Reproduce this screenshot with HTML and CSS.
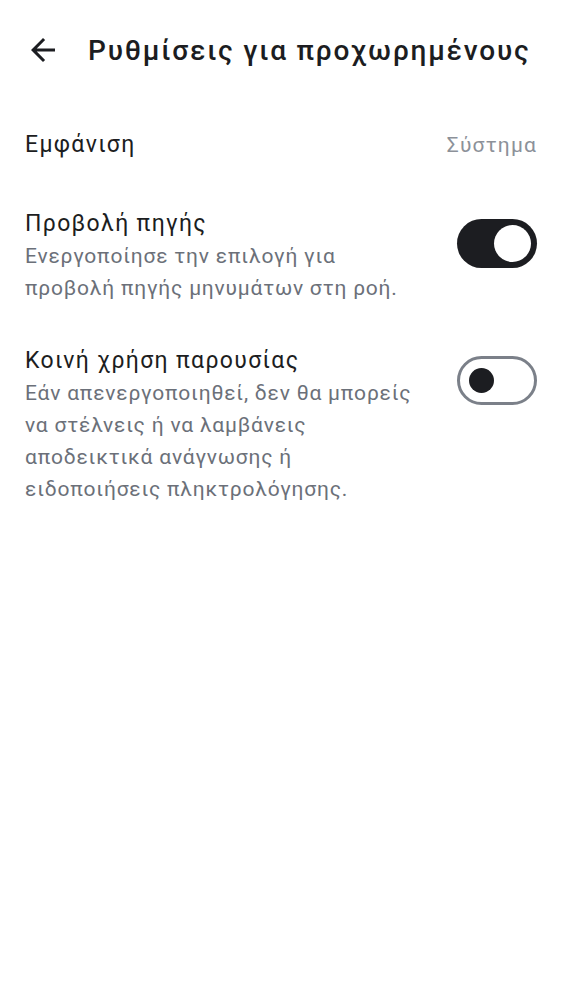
FILE: index.html
```html
<!DOCTYPE html>
<html lang="el">
<head>
<meta charset="utf-8">
<link rel="stylesheet" href="styles.css">
</head>
<body>
<div class="app">
  <header class="header">
    <svg class="back" width="36" height="36" viewBox="0 0 24 24"><path d="M20 11H7.83l5.59-5.59L12 4l-8 8 8 8 1.41-1.41L7.83 13H20v-2z" fill="#1c1d21"/></svg>
    <h1 class="title">Ρυθμίσεις για προχωρημένους</h1>
  </header>
  <div class="row row-first">
    <div class="label">Εμφάνιση</div>
    <div class="value">Σύστημα</div>
  </div>
  <div class="row row-second">
    <div class="text">
      <div class="label">Προβολή πηγής</div>
      <div class="desc">Ενεργοποίησε την επιλογή για<br>προβολή πηγής μηνυμάτων στη ροή.</div>
    </div>
    <div class="toggle on"><span class="knob"></span></div>
  </div>
  <div class="row row-third">
    <div class="text">
      <div class="label">Κοινή χρήση παρουσίας</div>
      <div class="desc">Εάν απενεργοποιηθεί, δεν θα μπορείς<br>να στέλνεις ή να λαμβάνεις<br>αποδεικτικά ανάγνωσης ή<br>ειδοποιήσεις πληκτρολόγησης.</div>
    </div>
    <div class="toggle off"><span class="knob"></span></div>
  </div>
</div>
</body>
</html>
```
FILE: styles.css
```css
html, body {
  margin: 0;
  padding: 0;
  background: #ffffff;
}
body {
  font-family: Roboto, "Noto Sans", sans-serif;
  color: #1c1d21;
}
.app {
  width: 562px;
  padding: 0 25px;
  box-sizing: border-box;
}
.header {
  height: 100px;
  display: flex;
  align-items: center;
  gap: 27px;
}
.back {
  flex: none;
}
.title {
  margin: 0;
  font-size: 28px;
  font-weight: 500;
  letter-spacing: 1.8px;
  white-space: nowrap;
}
.row {
  display: flex;
  justify-content: space-between;
  align-items: flex-start;
}
.row-first {
  margin-top: 29px;
  align-items: center;
}
.row-second {
  margin-top: 47px;
}
.row-third {
  margin-top: 41px;
}
.label {
  font-size: 23px;
  line-height: 32px;
  letter-spacing: 1.35px;
}
.value {
  font-size: 21px;
  line-height: 32px;
  color: #8c9199;
  letter-spacing: 1.15px;
}
.desc {
  font-size: 21px;
  line-height: 32px;
  color: #6b7079;
  letter-spacing: 0.8px;
}
.toggle {
  width: 80px;
  height: 49px;
  border-radius: 25px;
  box-sizing: border-box;
  margin-top: 11px;
  display: flex;
  align-items: center;
  flex: none;
}
.toggle.on {
  background: #1c1d21;
  justify-content: flex-end;
  padding-right: 6px;
}
.toggle.on .knob {
  width: 37px;
  height: 37px;
  border-radius: 50%;
  background: #ffffff;
}
.toggle.off {
  background: #ffffff;
  border: 3px solid #7b8089;
  padding-left: 9px;
}
.toggle.off .knob {
  width: 25px;
  height: 25px;
  border-radius: 50%;
  background: #1c1d21;
}
```
